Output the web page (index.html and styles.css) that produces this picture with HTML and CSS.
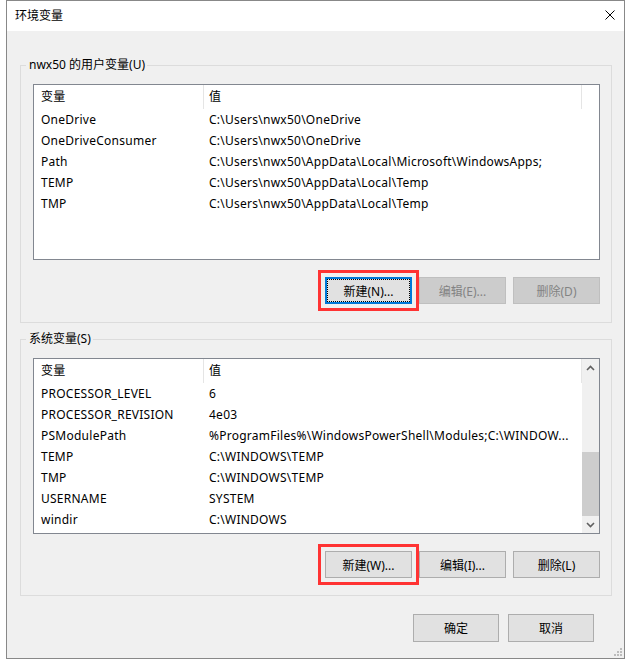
FILE: index.html
```html
<!DOCTYPE html>
<html lang="zh-CN">

<head>
  <meta charset="UTF-8">
  <meta name="viewport" content="width=device-width, initial-scale=1.0">
  <title>环境变量</title>
  <link rel="stylesheet" href="styles.css">
</head>

<body>
  <div class="window">
    <div class="titlebar">
      <span class="title">环境变量</span>
      <svg class="close" width="10" height="10" viewBox="0 0 10 10">
        <path d="M0.5 0.5 L9.5 9.5 M9.5 0.5 L0.5 9.5" stroke="#000" stroke-width="1" fill="none" />
      </svg>
    </div>

    <div class="content">
      <fieldset class="group">
        <legend>nwx50 的用户变量(U)</legend>
        <div class="list">
          <div class="view">
            <div class="row head"><span class="c1">变量</span><span class="c2">值</span></div>
            <div class="row"><span class="c1">OneDrive</span><span class="c2">C:\Users\nwx50\OneDrive</span></div>
            <div class="row"><span class="c1">OneDriveConsumer</span><span class="c2">C:\Users\nwx50\OneDrive</span></div>
            <div class="row"><span class="c1">Path</span><span class="c2">C:\Users\nwx50\AppData\Local\Microsoft\WindowsApps;</span></div>
            <div class="row"><span class="c1">TEMP</span><span class="c2">C:\Users\nwx50\AppData\Local\Temp</span></div>
            <div class="row"><span class="c1">TMP</span><span class="c2">C:\Users\nwx50\AppData\Local\Temp</span></div>
          </div>
        </div>
        <div class="buttons">
          <button class="btn default mark">新建(N)...</button>
          <button class="btn" disabled>编辑(E)...</button>
          <button class="btn" disabled>删除(D)</button>
        </div>
      </fieldset>

      <fieldset class="group system">
        <legend>系统变量(S)</legend>
        <div class="list">
          <div class="view">
            <div class="row head"><span class="c1">变量</span><span class="c2">值</span></div>
            <div class="row"><span class="c1">PROCESSOR_LEVEL</span><span class="c2">6</span></div>
            <div class="row"><span class="c1">PROCESSOR_REVISION</span><span class="c2">4e03</span></div>
            <div class="row"><span class="c1">PSModulePath</span><span class="c2">%ProgramFiles%\WindowsPowerShell\Modules;C:\WINDOW...</span></div>
            <div class="row"><span class="c1">TEMP</span><span class="c2">C:\WINDOWS\TEMP</span></div>
            <div class="row"><span class="c1">TMP</span><span class="c2">C:\WINDOWS\TEMP</span></div>
            <div class="row"><span class="c1">USERNAME</span><span class="c2">SYSTEM</span></div>
            <div class="row"><span class="c1">windir</span><span class="c2">C:\WINDOWS</span></div>
          </div>
          <div class="scrollbar">
            <div class="sb-btn">
              <svg width="9" height="6" viewBox="0 0 9 6"><path d="M1 5 L4.5 1.5 L8 5" stroke="#606060" stroke-width="1.6" fill="none" /></svg>
            </div>
            <div class="sb-track"><div class="sb-thumb"></div></div>
            <div class="sb-btn">
              <svg width="9" height="6" viewBox="0 0 9 6"><path d="M1 1 L4.5 4.5 L8 1" stroke="#606060" stroke-width="1.6" fill="none" /></svg>
            </div>
          </div>
        </div>
        <div class="buttons">
          <button class="btn mark">新建(W)...</button>
          <button class="btn">编辑(I)...</button>
          <button class="btn">删除(L)</button>
        </div>
      </fieldset>

      <div class="dialog-buttons">
        <button class="btn">确定</button>
        <button class="btn">取消</button>
      </div>
    </div>

    <!-- resize grip -->
    <svg class="grip" width="8" height="8" viewBox="0 0 8 8">
      <rect x="6" y="0" width="2" height="2" />
      <rect x="3" y="3" width="2" height="2" />
      <rect x="6" y="3" width="2" height="2" />
      <rect x="0" y="6" width="2" height="2" />
      <rect x="3" y="6" width="2" height="2" />
      <rect x="6" y="6" width="2" height="2" />
    </svg>
  </div>
</body>

</html>
```

FILE: styles.css
```css
body {
  margin: 0;
  background: #fff;
  font-family: "Noto Sans", "Noto Sans CJK SC", sans-serif;
  font-size: 12px;
  color: #000;
}

.window {
  position: relative;
  width: 619px;
  margin-left: 6px;
  border: 1px solid #888;
  box-sizing: border-box;
}

.titlebar {
  display: flex;
  align-items: center;
  height: 30px;
  padding: 0 9px 0 8px;
  background: #fff;
}
.title {
  flex: 1;
  line-height: 16px;
}
.close {
  margin-top: -2px;
}

.content {
  background: #f0f0f0;
  padding: 26px 12px 16px 13px;
}

.group {
  margin: 0;
  min-width: 0;
  border: 1px solid #dcdcdc;
  padding: 11px 11px 18px 12px;
}
.group.system {
  margin-top: 8px;
  padding-bottom: 17px;
}
.group legend {
  margin-left: -7px;
  padding: 0 2px 0 3px;
  line-height: 16px;
}

.list {
  display: flex;
  height: 176px;
  border: 1px solid #828790;
  background: #fff;
  box-sizing: border-box;
}
.view {
  flex: 1;
  overflow: hidden;
}

.row {
  display: flex;
  height: 21px;
  padding-top: 1px;
  line-height: 20px;
  box-sizing: border-box;
  letter-spacing: 0.25px;
}
.row.head {
  height: 24px;
  padding-top: 0;
  line-height: 24px;
}
.c1, .c2 {
  box-sizing: border-box;
  white-space: nowrap;
  overflow: hidden;
}
.c1 {
  width: 170px;
  padding-left: 7px;
}
.c2 {
  width: 378px;
  padding-left: 5px;
}
.head .c1, .head .c2 {
  border-right: 1px solid #e5e5e5;
}

.scrollbar {
  display: flex;
  flex-direction: column;
  width: 17px;
  background: #f0f0f0;
}
.sb-btn {
  display: flex;
  align-items: center;
  justify-content: center;
  height: 17px;
}
.sb-track {
  flex: 1;
  display: flex;
  flex-direction: column;
  justify-content: flex-end;
}
.sb-thumb {
  height: 64px;
  background: #cdcdcd;
}

.buttons {
  display: flex;
  justify-content: flex-end;
  gap: 7px;
  margin-top: 17px;
}

.btn {
  width: 87px;
  height: 27px;
  padding: 0;
  border: 1px solid #adadad;
  background: #e1e1e1;
  color: #000;
  font: inherit;
  box-sizing: border-box;
}
.btn:disabled {
  background: #cccccc;
  border-color: #bfbfbf;
  color: #838383;
}
.btn.default {
  border: 2px solid #0078d7;
  outline: 1px dotted #000;
  outline-offset: -3px;
}
/* red highlight around the "new" buttons */
.btn.mark {
  box-shadow: 0 0 0 4px #f0f0f0, 0 0 0 7px #f33;
}

.dialog-buttons {
  display: flex;
  justify-content: flex-end;
  gap: 9px;
  margin-top: 18px;
  padding-right: 18px;
}
.dialog-buttons .btn {
  width: 86px;
  height: 28px;
}

.grip {
  position: absolute;
  right: 2px;
  bottom: 2px;
  fill: #bcbcbc;
}
```
